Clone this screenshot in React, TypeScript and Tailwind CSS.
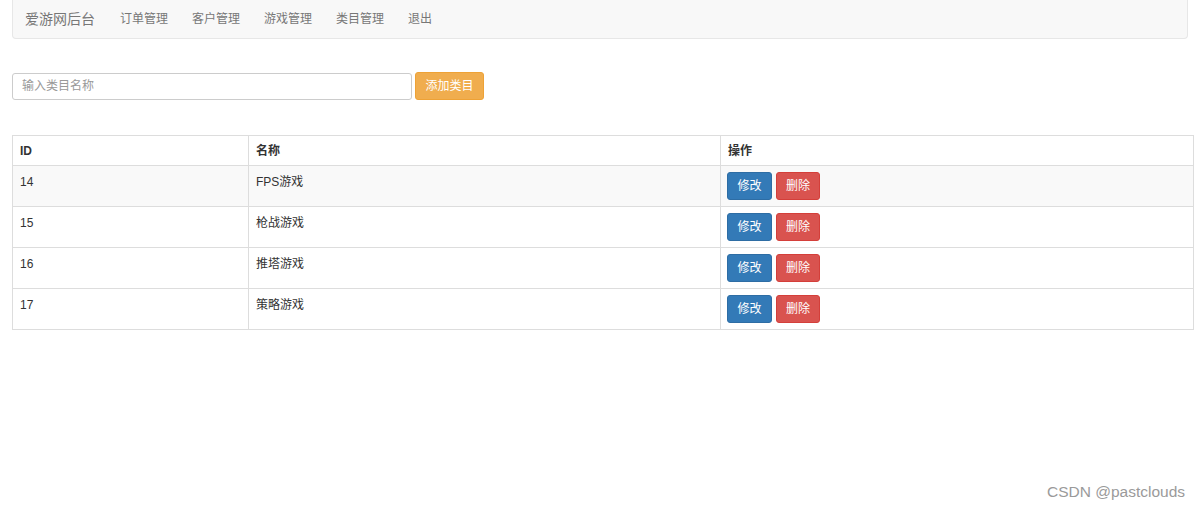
const rows = [
  { id: 14, name: "FPS游戏" },
  { id: 15, name: "枪战游戏" },
  { id: 16, name: "推塔游戏" },
  { id: 17, name: "策略游戏" },
];

const font = "font-['Liberation_Sans','Noto_Sans_CJK_SC',sans-serif]";

export default function App() {
  return (
    <div className={`relative h-[510px] w-[1200px] bg-white px-3 text-[#333] ${font}`}>
      {/* Navbar */}
      <nav className="flex h-[39px] items-center rounded-b border border-t-0 border-[#e7e7e7] bg-[#f8f8f8] pl-[12px]">
        <span className="mr-[25px] text-[14px] text-[#777]">爱游网后台</span>
        <div className="flex items-center gap-6 text-[12px] text-[#777]">
          <span>订单管理</span>
          <span>客户管理</span>
          <span>游戏管理</span>
          <span>类目管理</span>
          <span>退出</span>
        </div>
      </nav>

      {/* Add form */}
      <div className="mt-[33px] flex items-center gap-[3px]">
        <input
          placeholder="输入类目名称"
          className="h-[27px] w-[400px] rounded-[3px] border border-[#ccc] px-[9px] text-[12px] placeholder:text-[#999] outline-none"
        />
        <button className="h-[28px] w-[69px] rounded-[3px] border border-[#eea236] bg-[#f0ad4e] text-[12px] text-white">
          添加类目
        </button>
      </div>

      {/* Table */}
      <table className="mt-[35px] w-[1182px] border-collapse border border-[#ddd] text-[12px]">
        <thead>
          <tr className="h-[30px]">
            <th className="w-[236px] border border-[#ddd] px-[7px] text-left font-bold">ID</th>
            <th className="w-[472px] border border-[#ddd] px-[7px] text-left font-bold">名称</th>
            <th className="border border-[#ddd] px-[7px] text-left font-bold">操作</th>
          </tr>
        </thead>
        <tbody>
          {rows.map((r, i) => (
            <tr key={r.id} className={`h-[41px] ${i === 0 ? "bg-[#f9f9f9]" : "bg-white"}`}>
              <td className="border border-[#ddd] px-[7px] pt-[7px] align-top">{r.id}</td>
              <td className="border border-[#ddd] px-[7px] pt-[7px] align-top">{r.name}</td>
              <td className="border border-[#ddd] px-[6px] py-[6px] align-top">
                <div className="flex gap-1">
                  <button className="h-[28px] w-[45px] rounded-[3px] border border-[#2e6da4] bg-[#337ab7] text-[12px] text-white">
                    修改
                  </button>
                  <button className="h-[28px] w-[44px] rounded-[3px] border border-[#d43f3a] bg-[#d9534f] text-[12px] text-white">
                    删除
                  </button>
                </div>
              </td>
            </tr>
          ))}
        </tbody>
      </table>

      <div className="absolute bottom-[7px] right-[15px] text-[15.5px] text-[#9a9a9a]">CSDN @pastclouds</div>
    </div>
  );
}
